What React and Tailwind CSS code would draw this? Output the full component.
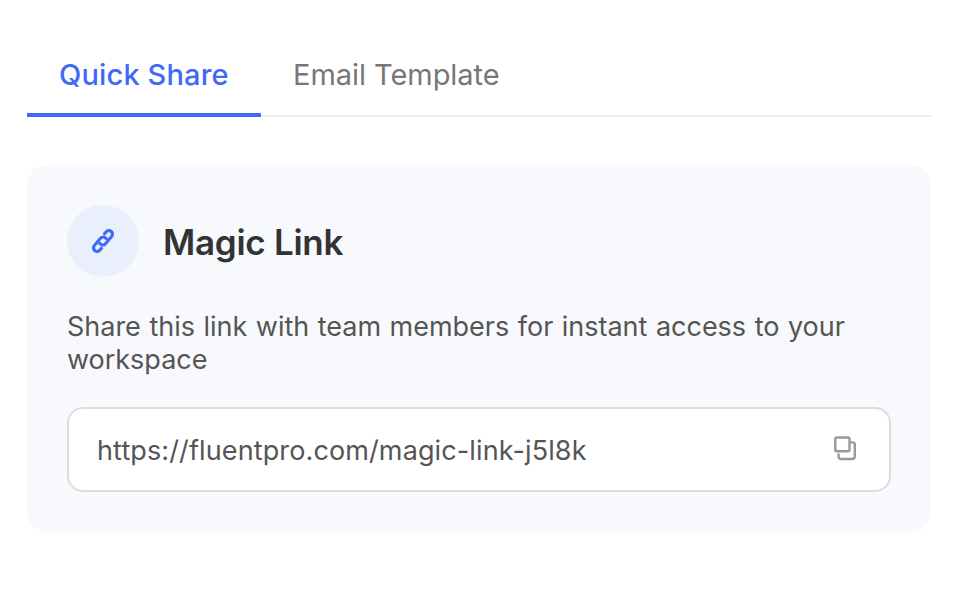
function LinkIcon() {
  return (
    <svg width="30" height="30" viewBox="-15 -15 30 30" fill="none" stroke="#4169f7" strokeWidth="3.1" strokeLinecap="butt">
      <g transform="rotate(-49)">
        <path d="M5.2 -3.6H9A3.6 3.6 0 0 1 9 3.6H-0.4A3.6 3.6 0 0 1 -3.4 -2.1" />
        <path d="M-5.2 3.6H-9A3.6 3.6 0 0 1 -9 -3.6H0.4A3.6 3.6 0 0 1 3.4 2.1" />
      </g>
    </svg>
  );
}

function CopyIcon() {
  return (
    <svg width="24" height="26" viewBox="0 0 24 26" fill="none" stroke="#999999" strokeWidth="2.4">
      <rect x="2.3" y="2.5" width="14.2" height="13.7" rx="1.4" />
      <path d="M17 7.4H19.6A2.2 2.2 0 0 1 21.8 9.6V21.2A2.8 2.8 0 0 1 19 24H8.4A2.8 2.8 0 0 1 5.6 21.2V18.4" />
    </svg>
  );
}

export default function App() {
  return (
    <main className="h-[594px] w-[966px] bg-white px-[27px] pt-8 font-['Inter',sans-serif]">
      <nav className="flex h-[85px] w-[904px] bg-[linear-gradient(#eeeeee,#eeeeee)] bg-[length:100%_2px] bg-bottom bg-no-repeat text-[29px] leading-[36px]">
        <button className="w-[234px] border-b-4 border-[#4169f7] pt-1 pl-8 text-left font-medium tracking-[0.15px] whitespace-nowrap text-[#4169f7]">
          Quick Share
        </button>
        <button className="border-b-4 border-transparent pt-1 pl-8 tracking-[-0.05px] whitespace-nowrap text-[#777777]">
          Email Template
        </button>
      </nav>
      <section className="mt-12 h-[367px] w-[904px] rounded-[20px] bg-[#f8f9fd] p-10">
        <header className="flex items-center gap-6">
          <div className="flex size-[72px] items-center justify-center rounded-full bg-[#e9effd]">
            <LinkIcon />
          </div>
          <h2 className="pt-0.5 text-[35px] leading-[44px] font-semibold tracking-[-0.28px] whitespace-nowrap text-[#333333]">Magic Link</h2>
        </header>
        <p className="mt-[33px] text-[27px] leading-[33px] tracking-[-0.02px] [word-spacing:1px] text-[#555555]">
          <span className="whitespace-nowrap">Share this link with team members for instant access to your</span>
          <br />
          workspace
        </p>
        <div className="mt-[31px] flex h-[85px] items-center justify-between rounded-[16px] border-2 border-[#dddddd] bg-white pr-8 pl-7">
          <span className="pt-0.5 text-[27px] leading-[34px] tracking-[0.12px] whitespace-nowrap text-[#555555]">https://fluentpro.com/magic-link-j5l8k</span>
          <button aria-label="Copy link" className="pb-[3px]">
            <CopyIcon />
          </button>
        </div>
      </section>
    </main>
  );
}
